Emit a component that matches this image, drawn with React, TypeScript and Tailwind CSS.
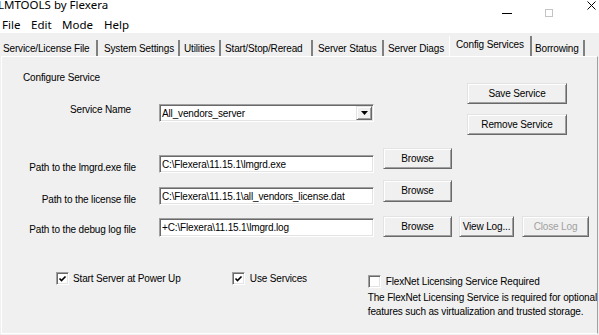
import React from "react";

const btn =
  "flex items-center justify-center bg-[#f0f0f0] border border-t-[#e3e3e3] border-l-[#e3e3e3] border-r-[#696969] border-b-[#696969] shadow-[inset_1px_1px_0_#ffffff,inset_-1px_-1px_0_#a0a0a0] whitespace-nowrap leading-none";
const field =
  "flex items-center bg-white border border-t-[#a0a0a0] border-l-[#a0a0a0] border-r-white border-b-white shadow-[inset_1px_1px_0_#696969,inset_-1px_-1px_0_#e3e3e3] pl-[2px] whitespace-nowrap overflow-hidden";

function Check({ checked }: { checked: boolean }) {
  return (
    <div className="w-[13px] h-[13px] bg-white border border-t-[#a0a0a0] border-l-[#a0a0a0] border-r-white border-b-white shadow-[inset_1px_1px_0_#696969,inset_-1px_-1px_0_#e3e3e3] flex items-center justify-center shrink-0">
      {checked && (
        <svg width="9" height="9" viewBox="0 0 9 9">
          <polyline points="1.5,4.5 3.5,6.5 7.5,2.5" fill="none" stroke="#000" strokeWidth="1.6" />
        </svg>
      )}
    </div>
  );
}

export default function App() {
  return (
    <div className="w-[599px] h-[335px] overflow-hidden bg-[#f0f0f0] text-black font-['Liberation_Sans',Arial,sans-serif] text-[10px] tracking-[-0.15px]">
      {/* Title bar */}
      <div className="h-[17px] bg-white flex items-start">
        <span className="ml-[-2px] mt-[-2px] text-[11.5px] leading-[14px] tracking-normal font-['Noto_Sans',sans-serif]">
          LMTOOLS by Flexera
        </span>
        <div className="ml-auto flex items-start">
          <div className="mt-[13px] w-[10px] h-px bg-black" />
          <div className="ml-[33px] mt-[9px] w-[8px] h-[8px] border border-[#c4c4c4]" />
          <svg className="ml-[34px] mt-[1px] mr-[3px]" width="9" height="9" viewBox="0 0 9 9">
            <path d="M0.5 0.5 L8.5 8.5 M8.5 0.5 L0.5 8.5" stroke="#000" strokeWidth="1" />
          </svg>
        </div>
      </div>
      {/* Menu bar */}
      <div className="h-[16px] bg-white flex items-center text-[11.5px] tracking-normal font-['Noto_Sans',sans-serif] leading-none">
        <span className="ml-[2px] w-[29px]">File</span>
        <span className="w-[31px]">Edit</span>
        <span className="w-[42px]">Mode</span>
        <span>Help</span>
      </div>
      {/* Tab strip */}
      <div className="h-[23px] flex items-end">
        <div className="w-[98px] h-[16px] pl-[3px] flex items-center border-r-2 border-r-[#808080] whitespace-nowrap">Service/License File</div>
        <div className="w-[82px] h-[16px] pl-[6px] flex items-center border-r-2 border-r-[#808080] whitespace-nowrap">System Settings</div>
        <div className="w-[41px] h-[16px] pl-[4px] flex items-center border-r-2 border-r-[#808080] whitespace-nowrap">Utilities</div>
        <div className="w-[92px] h-[16px] pl-[4px] flex items-center border-r-2 border-r-[#808080] whitespace-nowrap">Start/Stop/Reread</div>
        <div className="w-[71px] h-[16px] pl-[5px] flex items-center border-r-2 border-r-[#808080] whitespace-nowrap">Server Status</div>
        <div className="w-[65px] h-[16px] pl-[4px] flex items-center whitespace-nowrap">Server Diags</div>
        <div className="w-[83px] h-[20px] pl-[6px] pb-[4px] flex items-center border-l border-l-white border-r-2 border-r-[#808080] whitespace-nowrap">Config Services</div>
        <div className="w-[53px] h-[16px] pl-[3px] flex items-center border-r-2 border-r-[#808080] whitespace-nowrap">Borrowing</div>
      </div>
      {/* Panel */}
      <div className="ml-[1px] w-[597px] h-[278px] border-l border-t border-white border-r border-r-[#a0a0a0] border-b border-b-white">
        {/* Top block */}
        <div className="h-[91px] flex">
          <div className="w-[465px]">
            <div className="ml-[21px] mt-[15px] leading-[12px]">Configure Service</div>
            <div className="mt-[20px] flex items-start">
              <div className="ml-[68px] w-[89px] leading-[12px]">Service Name</div>
              <div className={`${field} w-[215px] h-[18px] justify-between pr-[1px]`}>
                <span>All_vendors_server</span>
                <div className="w-[16px] h-[14px] flex items-center justify-center bg-[#f0f0f0] border border-t-[#e3e3e3] border-l-[#e3e3e3] border-r-[#696969] border-b-[#696969] shadow-[inset_1px_1px_0_#ffffff,inset_-1px_-1px_0_#a0a0a0]">
                  <svg width="7" height="4" viewBox="0 0 7 4">
                    <polygon points="0,0 7,0 3.5,4" fill="#000" />
                  </svg>
                </div>
              </div>
            </div>
          </div>
          <div className="flex flex-col mt-[26px] gap-[10px]">
            <div className={`${btn} w-[100px] h-[21px] text-black`}>Save Service</div>
            <div className={`${btn} w-[100px] h-[21px] text-black`}>Remove Service</div>
          </div>
        </div>
        {/* Row 1 */}
        <div className="h-[32px] flex items-start">
          <div className="w-[134px] mt-[14px] text-right leading-[12px] whitespace-nowrap">Path to the lmgrd.exe file</div>
          <div className={`${field} ml-[23px] mt-[7px] w-[215px] h-[18px]`}>{"C:\\Flexera\\11.15.1\\lmgrd.exe"}</div>
          <div className={`${btn} ml-[9px] w-[69px] h-[21px] text-black`}>Browse</div>
        </div>
        {/* Row 2 */}
        <div className="h-[36px] flex items-start">
          <div className="w-[134px] mt-[14px] text-right leading-[12px] whitespace-nowrap">Path to the license file</div>
          <div className={`${field} ml-[23px] mt-[7px] w-[215px] h-[18px]`}>{"C:\\Flexera\\11.15.1\\all_vendors_license.dat"}</div>
          <div className={`${btn} ml-[9px] w-[69px] h-[22px] text-black`}>Browse</div>
        </div>
        {/* Row 3 */}
        <div className="h-[21px] flex items-start">
          <div className="w-[134px] mt-[8px] text-right leading-[12px] whitespace-nowrap">Path to the debug log file</div>
          <div className={`${field} ml-[23px] mt-[2px] w-[215px] h-[19px]`}>{"+C:\\Flexera\\11.15.1\\lmgrd.log"}</div>
          <div className={`${btn} ml-[9px] w-[69px] h-[21px] text-black`}>Browse</div>
          <div className={`${btn} ml-[7px] w-[55px] h-[21px] text-black`}>View Log...</div>
          <div className={`${btn} ml-[8px] w-[67px] h-[21px] text-[#a0a0a0]`}>Close Log</div>
        </div>
        {/* Checkboxes */}
        <div className="mt-[35px] flex items-start">
          <div className="ml-[54px] w-[176px] flex items-center gap-[4px] leading-[12px]">
            <Check checked />
            <span>Start Server at Power Up</span>
          </div>
          <div className="w-[136px] flex items-center gap-[5px] leading-[12px]">
            <Check checked />
            <span>Use Services</span>
          </div>
          <div className="mt-[3px] flex flex-col">
            <div className="flex items-center gap-[5px] leading-[12px]">
              <Check checked={false} />
              <span className="whitespace-nowrap">FlexNet Licensing Service Required</span>
            </div>
            <div className="mt-[3px] leading-[14px] whitespace-nowrap">
              The FlexNet Licensing Service is required for optional
              <br />
              features such as virtualization and trusted storage.
            </div>
          </div>
        </div>
      </div>
    </div>
  );
}
